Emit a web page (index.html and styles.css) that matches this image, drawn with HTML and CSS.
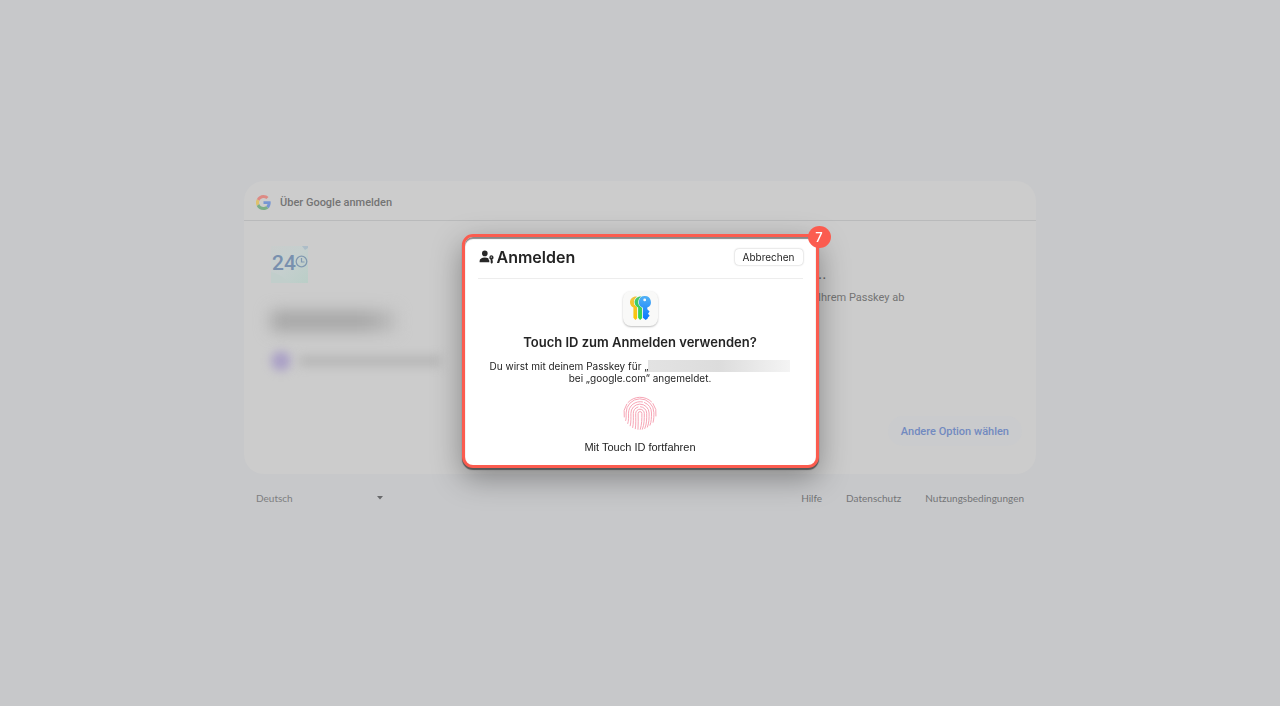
FILE: index.html
```
<!DOCTYPE html>
<html lang="de">
<head>
  <meta charset="UTF-8">
  <meta name="viewport" content="width=device-width,initial-scale=1">
  <title>Über Google anmelden</title>
  <link rel="stylesheet" href="styles.css">
</head>
<body>
  <div class="page">
    <main class="card">
      <header class="card-header">
        <svg class="google-logo" viewBox="0 0 48 48" aria-hidden="true">
          <path fill="#dd8a84" d="M24 9.500c3.500 0 6.700 1.200 9.200 3.600l6.900-6.900C35.900 2.400 30.500 0 24 0 14.600 0 6.500 5.400 2.600 13.200l8 6.200C12.400 13.700 17.700 9.500 24 9.500z"/>
          <path fill="#7696d3" d="M47 24.600c0-1.600-.2-3.100-.4-4.600H24v9h12.900c-.6 3-2.200 5.500-4.700 7.200l7.700 6C44.400 38 47 31.800 47 24.600z"/>
          <path fill="#dfc16a" d="M10.500 28.600A14.500 14.500 0 0 1 10.500 19.400l-8-6.200A24 24 0 0 0 2.600 34.800z"/>
          <path fill="#7bae87" d="M24 48c6.500 0 11.900-2.100 15.900-5.800l-7.700-6c-2.200 1.500-4.900 2.300-8.200 2.300-6.300 0-11.600-4.200-13.500-9.900l-8 6.200C6.500 42.600 14.600 48 24 48z"/>
        </svg>
        <span>Über Google anmelden</span>
      </header>

      <div class="card-body">
        <section class="account">
          <svg class="app-logo" viewBox="0 0 37 37" role="img" aria-label="24">
            <defs>
              <linearGradient id="tile" x1="0" y1="0" x2="1" y2="1">
                <stop offset="0" stop-color="#c9cdcc"/>
                <stop offset="0.500" stop-color="#c5cfce"/>
                <stop offset="1" stop-color="#bacec7"/>
              </linearGradient>
            </defs>
            <rect width="37" height="37" fill="url(#tile)"/>
            <path d="M31 0h6v2l-3 2z" fill="#adbdc8"/>
            <path d="M0 26q12 3 18 11H0z" fill="#c1cecb"/>
            <text x="1" y="24" class="app-logo-text">24</text>
            <circle cx="30.500" cy="15.500" r="5.300" fill="none" stroke="#8299b1" stroke-width="1.300"/>
            <path d="M30.500 12v4h3" fill="none" stroke="#8299b1" stroke-width="1.200"/>
          </svg>
          <div class="hidden-name"></div>
          <div class="hidden-account">
            <span class="avatar"></span>
            <span class="mail"></span>
          </div>
        </section>

        <section class="passkey">
          <h1>..</h1>
          <p>Ihrem Passkey ab</p>
          <button type="button" class="other-option">Andere Option wählen</button>
        </section>
      </div>
    </main>

    <footer class="footer">
      <div class="language">
        <select aria-label="Sprache">
          <option>Deutsch</option>
        </select>
        <svg viewBox="0 0 6 4" aria-hidden="true"><path d="M0 0h6L3 3.500z"/></svg>
      </div>
      <nav class="links">
        <a href="#">Hilfe</a>
        <a href="#">Datenschutz</a>
        <a href="#">Nutzungsbedingungen</a>
      </nav>
    </footer>
  </div>

  <!-- Touch ID Dialog -->
  <div class="overlay">
    <div class="dialog" role="dialog" aria-labelledby="dialog-title">
      <span class="step">7</span>
      <header class="dialog-header">
        <svg class="user-icon" viewBox="0 0 15 14" aria-hidden="true">
          <circle cx="5.800" cy="3.400" r="2.800"/>
          <path d="M.6 12.200V11C.6 8.700 2.900 7.500 5.800 7.500c1.400 0 2.600.3 3.500.8.100.9.400 1.600 1 2.100v1.800z"/>
          <path fill-rule="evenodd" d="M12.300 5.300a2.200 2.200 0 0 1 1 4.200v.8l.8.800-.7.800.6.700-1.300 1.200-1-1V9.700a2.300 2.300 0 0 1 .6-4.400zm0 1.100a.6.6 0 1 0 0 1.300.6.6 0 0 0 0-1.300z"/>
        </svg>
        <h2>Anmelden</h2>
        <button type="button" class="cancel">Abbrechen</button>
      </header>

      <svg class="keys-icon" viewBox="0 0 35 35" aria-hidden="true">
        <defs>
          <linearGradient id="blue" x1="0" y1="0" x2="0" y2="1">
            <stop offset="0" stop-color="#51b1f4"/>
            <stop offset="1" stop-color="#0878ff"/>
          </linearGradient>
          <linearGradient id="green" x1="0" y1="0" x2="0" y2="1">
            <stop offset="0" stop-color="#43c66f"/>
            <stop offset="1" stop-color="#36d84d"/>
          </linearGradient>
          <linearGradient id="yellow" x1="0" y1="0" x2="0" y2="1">
            <stop offset="0" stop-color="#eec442"/>
            <stop offset="1" stop-color="#ffc500"/>
          </linearGradient>
        </defs>
        <path fill="url(#yellow)" d="M13 5.500C9.500 5.500 7 8 7 11.300c0 2.500 1.500 4.300 3.400 5.300v10.200l2 2.200 1.800-1.800V15.600c-2-.9-3.300-2.300-3.300-4.400 0-2.400 1.500-4 3.300-5.400z"/>
        <path class="key-edge" fill="url(#green)" d="M17.600 5.500c-3.500 0-6 2.500-6 5.800 0 2.500 1.500 4.300 3.500 5.300v10.200l2 2.200 2-1.800V15.800c-2.300-.9-3.500-2.500-3.500-4.600 0-2.400 1.500-4 3.300-5.400z"/>
        <path class="key-edge" fill="url(#blue)" fill-rule="evenodd" d="M21.700 5a6 6 0 0 1 2.600 11.500v1.800l2.300 2.100-1.600 2.300 1.700 2-1.800 1.900v.6L22.700 29l-2.800-2.300V16.700A6 6 0 0 1 21.700 5zm0 2.500a1.400 1.400 0 1 0 0 2.800 1.400 1.400 0 0 0 0-2.800z"/>
      </svg>

      <h3 id="dialog-title">Touch ID zum Anmelden verwenden?</h3>
      <p class="message">Du wirst mit deinem Passkey für „<span class="redacted"></span><br>bei „google.com“ angemeldet.</p>

      <svg class="fingerprint" viewBox="0 0 36 36" aria-hidden="true">
        <path d="M6 7.500A16.300 16.300 0 0 1 29.500 6.800M31 8.500A16.300 16.300 0 0 1 34 21M2.200 22A16.300 16.300 0 0 1 4.700 9.200"/>
        <path d="M3.700 25.500c.7-2 .4-4.500.4-7.500a13.900 13.900 0 0 1 27.800-.5c0 3 .1 6.500-.8 9.800"/>
        <path d="M5.800 28.500c1-3 .7-6.500.7-10.300A11.500 11.500 0 0 1 20.500 6.900M22.500 7.500A11.500 11.500 0 0 1 29.500 18c0 4.500 0 8.500-1.500 12.200"/>
        <path d="M8.200 30.800c1-4 .7-8 .7-12.300a9.100 9.100 0 0 1 18.200-.5c0 5 .1 9.700-1.700 14.100"/>
        <path d="M10.700 32.500c1-4.500.6-9 .6-14A6.700 6.700 0 0 1 16 12M18.500 11.700a6.700 6.700 0 0 1 6.200 6.500c0 5.500.2 10.500-1.900 15.300"/>
        <path d="M13.300 33.700c.8-5 .4-10 .4-15.200a4.300 4.300 0 0 1 8.600 0c0 5.500.1 10.700-1.900 15.700"/>
        <path d="M16 34.300c.5-5 .1-10 .1-15.800a1.900 1.900 0 0 1 3.800 0c0 5.500 0 10.500-1.600 15.800"/>
      </svg>
      <p class="continue">Mit Touch ID fortfahren</p>
    </div>
  </div>
</body>
</html>
```

FILE: styles.css
```
* { box-sizing:border-box; }
body { margin:0; font-family:Inter, "Liberation Sans", sans-serif; background:#c7c8ca; color:#747474; }
h1, h2, h3, p { margin:0; }
button, select { font-family:inherit; }

.page { min-height:100vh; display:flex; flex-direction:column; align-items:center; justify-content:center; font-family:Roboto, sans-serif; }
.card { width:100%; max-width:792px; background:#ccc; border-radius:20px; }
.card-header { display:flex; align-items:center; gap:9px; height:40px; padding:3px 12px 0; border-bottom:1px solid #b9babb; font-size:11px; font-weight:500; }
.google-logo { width:15px; height:15px; }
.card-body { display:grid; grid-template-columns:1fr 218px; min-height:253px; }

.account { padding:25px 27px; }
.app-logo { display:block; width:37px; height:37px; }
.app-logo-text { font:500 21px Roboto, sans-serif; fill:#7890ae; }
.hidden-name { width:124px; height:20px; margin-top:28px; background:linear-gradient(to right, #a5a5a5 75%, #bbb); filter:blur(8px); }
.hidden-account { display:flex; align-items:center; gap:8px; margin-top:20px; }
.avatar { width:20px; height:20px; border-radius:50%; background:#aaa0c6; filter:blur(5px); }
.mail { width:142px; height:12px; background:#b9b9b9; filter:blur(5px); }

.passkey { display:flex; flex-direction:column; align-items:flex-start; padding:44px 14px 28px 0; }
.passkey h1 { font-size:16px; line-height:18px; font-weight:400; color:#666; }
.passkey p { margin-top:7px; font-size:11px; line-height:16px; }
.other-option { align-self:flex-end; margin-top:auto; height:30px; padding:0 13px; border:none; border-radius:15px; background:#cacbcd; color:#728ac0; font-size:11px; font-weight:500; cursor:pointer; }

/* Fußzeile */
.footer { width:100%; max-width:792px; display:flex; align-items:center; justify-content:space-between; height:51px; padding:0 12px 4px; font-family:Lato, sans-serif; font-size:10px; }
.language { display:flex; align-items:center; }
.language select { appearance:none; width:121px; padding:0; border:none; background:none; color:#7d7e80; font-size:10px; }
.language svg { width:6px; height:4px; fill:#68696b; }
.links { display:flex; gap:24px; }
.links a { color:#747577; text-decoration:none; }

/* Dialog */
.overlay { position:fixed; inset:0; display:flex; align-items:center; justify-content:center; padding-bottom:5px; }
.dialog { position:relative; display:flex; flex-direction:column; align-items:center; width:357px; max-width:100%; padding:6px 13px 10px; border:3px solid #fb5c4f; border-radius:11px; background:#fff; color:#242424; box-shadow:0 2px 1px #555, inset 0 2px 1px #888, 0 10px 30px rgba(0,0,0,0.35); }
.step { position:absolute; top:-11px; right:-15px; width:23px; height:22px; border-radius:50%; background:#fb5c4f; color:#fff; font-size:13px; font-weight:500; line-height:22px; text-align:center; }
.dialog-header { align-self:stretch; display:flex; align-items:center; gap:3px; height:36px; padding:0 0 7px 1px; border-bottom:1px solid #ededed; }
.user-icon { width:15px; height:14px; fill:#282828; }
.dialog-header h2 { font-size:16px; line-height:20px; font-weight:600; }
.cancel { margin-left:auto; height:16px; padding:0 8px; border:none; border-radius:4px; background:#fff; color:#242424; font-size:10px; line-height:16px; box-shadow:0 0 2px rgba(0,0,0,0.3); }
.keys-icon { width:35px; height:35px; margin-top:12px; border-radius:8px; background:#f9f9f8; box-shadow:0 1px 2px rgba(0,0,0,0.25); }
.key-edge { stroke:#f9f9f8; stroke-width:1; paint-order:stroke; }
.dialog h3 { margin-top:8px; font-size:13px; line-height:16px; font-weight:600; }
.message { margin-top:10px; font-size:10px; line-height:12px; text-align:center; }
.redacted { display:inline-block; width:142px; height:12px; vertical-align:bottom; background:linear-gradient(to right, #e3e3e3, #dcdcdc 50%, #f4f4f4); }
.fingerprint { width:36px; height:36px; margin-top:11px; fill:none; stroke:#f7a6b6; stroke-width:1; stroke-linecap:round; }
.continue { margin-top:8px; font-family:"Liberation Sans", sans-serif; font-size:11px; line-height:16px; }
```
